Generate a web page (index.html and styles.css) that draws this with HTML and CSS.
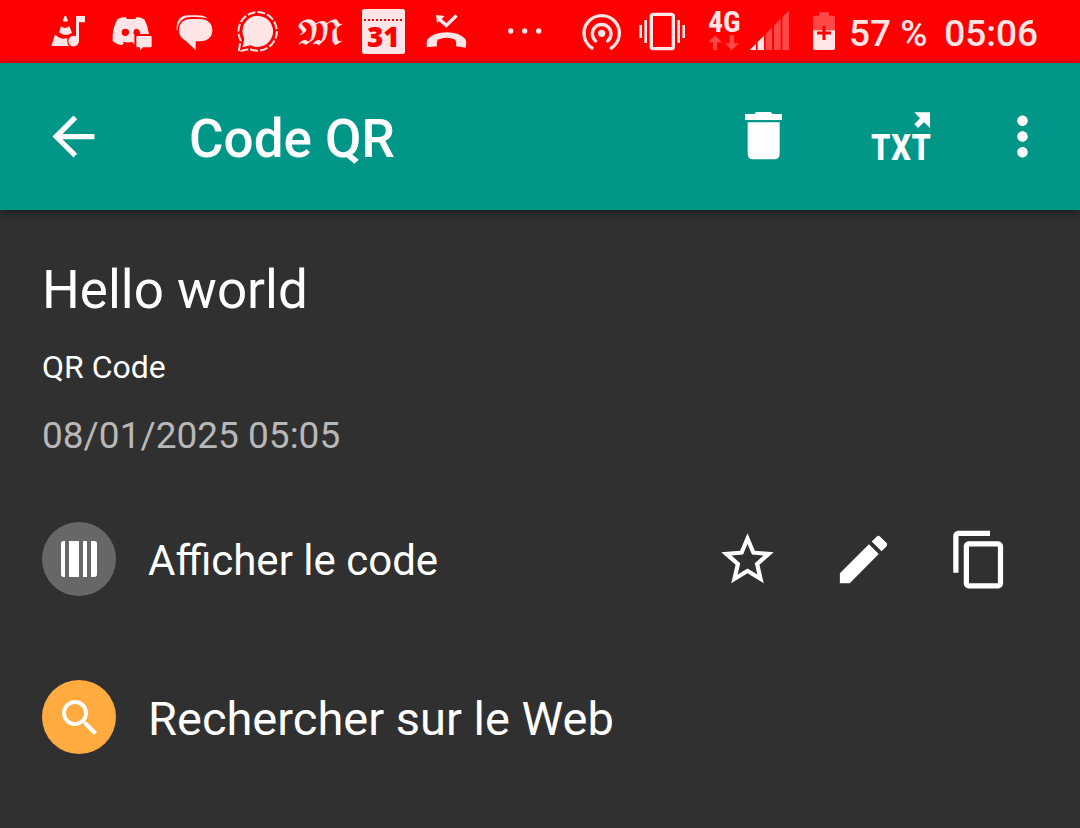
FILE: index.html
```html
<!DOCTYPE html>
<html lang="fr">
<head>
<meta charset="utf-8">
<meta name="viewport" content="width=device-width, initial-scale=1">
<title>Code QR</title>
<link rel="stylesheet" href="styles.css">
</head>
<body>
<div class="status-bar">
  <div class="status-icons">
    <svg class="status-icon" viewBox="-9 0 189 189" aria-hidden="true">
      <path d="M73 49Q76 47 79 49L84 62Q76 68 68 62ZM63 79Q75 90 88 78L96 98Q76 112 57 97ZM48 106Q62 120 82 115Q80 130 87 138H35Q34 134 37 130L44 106Z"/>
      <path d="M108 48H135V67H117V123A16 16 0 1 1 108 109Z"/>
    </svg>
    <svg class="status-icon" viewBox="180 0 189 189" aria-hidden="true">
      <path fill-rule="evenodd" d="M233 57Q245 51 257 51L261 57H286L290 51Q303 52 313 58Q324 78 327 102H283V134L277 126Q262 129 249 125L251 131L244 136Q230 133 218 124Q215 86 233 57ZM256 86A11 11 0 1 0 256 108A11 11 0 1 0 256 86ZM280 102Q280 86 291 86Q300 89 301 102Z"/>
      <path d="M292 108H332Q335 108 335 111V139Q335 142 332 142H309L300 151V142H292Q289 142 289 139V111Q289 108 292 108Z"/>
    </svg>
    <svg class="status-icon" viewBox="369 0 189 189" aria-hidden="true">
      <path d="M410 91C408 62 422 46 444 46H473Q493 46 503 56Q490 51 468 51H452C430 51 413 65 412 92Z"/>
      <path d="M453 57H479C503 57 517 69 517 91C517 112 503 124 480 124H467V151L437 122C424 115 417 105 417 91C417 70 430 57 453 57Z"/>
    </svg>
    <svg class="status-icon" viewBox="18 0 189 189" aria-hidden="true">
      <path d="M112 47A47 47 0 1 1 91 136L67 142L73 117A47 47 0 0 1 112 47Z"/>
      <path class="outline-6" stroke-dasharray="24 6" d="M112 36A58 58 0 1 1 89 147L56 154L62 121A58 58 0 0 1 112 36Z"/>
    </svg>
    <svg class="status-icon" viewBox="207 0 189 189" aria-hidden="true">
      <text class="press-mark" x="301" y="132" text-anchor="middle">𝕸</text>
    </svg>
    <svg class="status-icon" viewBox="396 0 189 189" aria-hidden="true">
      <rect x="426" y="27" width="129" height="135" rx="7"/>
      <path class="perforation" d="M432 60H549"/>
      <text class="calendar-day" x="490" y="141" text-anchor="middle">31</text>
    </svg>
    <svg class="status-icon" viewBox="585 0 189 189" aria-hidden="true">
      <path d="M648 45L674 48L665 57L679 69L706 43L713 50L679 83L657 64L651 70Z"/>
      <path d="M621 142Q618 125 623 117Q641 98 680 97Q719 98 736 117Q741 125 737 143L708 139Q710 126 706 119Q680 108 653 119Q649 126 651 139Z"/>
    </svg>
  </div>
  <svg class="status-icon" viewBox="9 0 189 189" aria-hidden="true">
    <circle cx="62" cy="93" r="8"/><circle cx="104" cy="93" r="8"/><circle cx="146" cy="93" r="8"/>
  </svg>
  <div class="system-icons">
    <svg class="status-icon" viewBox="240 0 189 189" aria-hidden="true">
      <circle cx="335" cy="100" r="11"/>
      <path class="outline-10" d="M317 123A28 28 0 1 1 353 123M306 144A53 53 0 1 1 364 144"/>
    </svg>
    <svg class="status-icon" viewBox="429 0 189 189" aria-hidden="true">
      <rect class="outline-10" x="484" y="43" width="66" height="103" rx="6"/>
      <path class="outline-8" d="M467 60V129M452 75V114M566 60V129M581 75V114"/>
    </svg>
    <svg class="status-icon narrow" viewBox="3 0 153 189" aria-hidden="true">
      <text class="network" x="88" y="96" text-anchor="middle">4G</text>
      <path class="faded" d="M60 106L81 127H66V151H54V127H40ZM104 106H117V130H132L110 151L90 130H104Z"/>
    </svg>
    <svg class="status-icon narrow" viewBox="156 0 153 189" aria-hidden="true">
      <path d="M164 150L183 131V150ZM188 126L207 107V150H188Z"/>
      <path class="faded" d="M212 102L231 82V150H212ZM237 76L257 56V150H237ZM262 51L282 32V150H262Z"/>
    </svg>
    <svg class="status-icon narrow" viewBox="309 0 153 189" aria-hidden="true">
      <path class="faded" d="M372 37H402V47H414Q420 47 420 53V91H354V53Q354 47 360 47H372Z"/>
      <path d="M354 91H420V145Q420 150 414 150H360Q354 150 354 145Z"/>
      <path class="battery-plus" d="M387 77V120M366 99H408"/>
    </svg>
  </div>
  <span class="status-text">57 %</span>
  <time class="status-text clock">05:06</time>
</div>

<header class="app-bar">
  <button class="icon-button" aria-label="Retour">
    <svg class="icon" viewBox="0 0 24 24"><path d="M20 11H7.83l5.59-5.59L12 4l-8 8 8 8 1.41-1.41L7.83 13H20z"/></svg>
  </button>
  <h1 class="app-title">Code QR</h1>
  <div class="app-actions">
    <button class="icon-button delete-button" aria-label="Supprimer">
      <svg class="icon" viewBox="36 45 189 189"><path d="M75 72H103L108 66H152L158 72H186V90H75ZM83 97H179V192Q179 208 163 208H99Q83 208 83 192Z"/></svg>
    </button>
    <button class="icon-button export-button" aria-label="Exporter en TXT">
      <svg class="icon" viewBox="450 45 189 189">
        <path d="M583 67H630V114L617 101L612 97L594 114L583 103L600 85Z"/>
        <text class="export-label" x="543" y="210" text-anchor="middle">TXT</text>
      </svg>
    </button>
    <button class="icon-button" aria-label="Plus d’options">
      <svg class="icon" viewBox="0 0 24 24"><path d="M12 8c1.100 0 2-.9 2-2s-.9-2-2-2-2 .9-2 2 .9 2 2 2zm0 2c-1.100 0-2 .9-2 2s.9 2 2 2 2-.9 2-2-.9-2-2-2zm0 6c-1.100 0-2 .9-2 2s.9 2 2 2 2-.9 2-2-.9-2-2-2z"/></svg>
    </button>
  </div>
</header>

<main class="content">
  <h2 class="code-text">Hello world</h2>
  <p class="code-format">QR Code</p>
  <time class="code-date" datetime="2025-01-08T05:05">08/01/2025 05:05</time>

  <div class="row">
    <button class="row-action">
      <svg class="badge" viewBox="36 36 222 222" aria-hidden="true"><path d="M105 93V201H101Q93 201 93 193V101Q93 93 101 93ZM117 93H147V201H117ZM159 93H171V201H159ZM183 93H193Q201 93 201 101V193Q201 201 193 201H183Z"/></svg>
      <span class="row-label">Afficher le code</span>
    </button>
    <div class="row-tools">
      <button class="icon-button" aria-label="Favori">
        <svg class="icon" viewBox="0 0 24 24"><path d="M22 9.240l-7.190-.62L12 2 9.190 8.630 2 9.240l5.460 4.730L5.820 21 12 17.270 18.180 21l-1.630-7.030L22 9.240zM12 15.400l-3.760 2.270 1-4.280-3.320-2.880 4.380-.38L12 6.100l1.710 4.040 4.380.38-3.320 2.880 1 4.280L12 15.400z"/></svg>
      </button>
      <button class="icon-button" aria-label="Modifier">
        <svg class="icon" viewBox="0 0 24 24"><path d="M3 17.250V21h3.750L17.810 9.940l-3.750-3.750L3 17.250zM20.710 7.040c.39-.39.39-1.020 0-1.410l-2.340-2.340c-.39-.39-1.020-.39-1.410 0l-1.830 1.830 3.750 3.750 1.830-1.830z"/></svg>
      </button>
      <button class="icon-button" aria-label="Copier">
        <svg class="icon" viewBox="0 0 24 24"><path d="M16 1H4c-1.100 0-2 .9-2 2v14h2V3h12V1zm3 4H8c-1.100 0-2 .9-2 2v14c0 1.100.9 2 2 2h11c1.100 0 2-.9 2-2V7c0-1.100-.9-2-2-2zm0 16H8V7h11v14z"/></svg>
      </button>
    </div>
  </div>

  <div class="row">
    <button class="row-action">
      <svg class="badge badge-search" viewBox="-7 -7 37 37" aria-hidden="true"><path d="M15.500 14h-.79l-.28-.27C15.410 12.590 16 11.110 16 9.500 16 5.910 13.090 3 9.500 3S3 5.910 3 9.500 5.910 16 9.500 16c1.610 0 3.090-.59 4.230-1.570l.27.28v.79l5 4.990L20.490 19l-4.990-5zm-6 0C7.010 14 5 11.990 5 9.500S7.010 5 9.500 5 14 7.010 14 9.500 11.990 14 9.500 14z"/></svg>
      <span class="row-label large">Rechercher sur le Web</span>
    </button>
  </div>
</main>
</body>
</html>
```

FILE: styles.css
```css
* {
  box-sizing: border-box;
}

body {
  margin: 0;
  background: #303030;
  color: #fff;
  font-family: Roboto, "Liberation Sans", sans-serif;
}

button {
  padding: 0;
  border: 0;
  background: none;
  color: inherit;
  font: inherit;
  cursor: pointer;
}

svg {
  display: block;
  flex: none;
  fill: currentColor;
}

/* Status bar */
.status-bar {
  display: flex;
  align-items: center;
  padding: 0 42px 0 37px;
  background: #f00;
  color: #ffe5e5;
  font-weight: 500;
  white-space: nowrap;
}

.status-icons,
.system-icons {
  display: flex;
}

.status-icons {
  margin-right: 15px;
}

.system-icons {
  margin-left: 14px;
}

.status-icon {
  width: 63px;
  height: 63px;
}

.status-icon.narrow {
  width: 51px;
}

.outline-6,
.outline-8,
.outline-10 {
  fill: none;
  stroke: currentColor;
  stroke-width: 6px;
}

.outline-8 {
  stroke-width: 8px;
}

.outline-10 {
  stroke-width: 10px;
  stroke-linecap: round;
}

.faded {
  fill: #ff4848;
}

.press-mark {
  font-family: "DejaVu Math TeX Gyre", "DejaVu Serif", "DejaVu Sans", serif;
  font-size: 96px;
}

.calendar-day {
  fill: #f00;
  font-family: "Open Sans", sans-serif;
  font-size: 84px;
  font-weight: 800;
}

.perforation {
  stroke: #f00;
  stroke-width: 6px;
  stroke-dasharray: 6 6;
}

.network,
.export-label {
  font-family: "Roboto Condensed", "Open Sans Condensed", Roboto, sans-serif;
  font-size: 90px;
  font-weight: 700;
}

.export-label {
  font-size: 110px;
}

.battery-plus {
  fill: none;
  stroke: #f00;
  stroke-width: 9px;
}

.status-text {
  padding-top: 4px;
  font-size: 37px;
  line-height: 59px;
}

.clock {
  margin-left: auto;
}

/* App bar */
.app-bar {
  display: flex;
  align-items: center;
  height: 147px;
  padding: 0 26px 0 42px;
  background: #009688;
  box-shadow: 0 2px 10px rgba(0, 0, 0, 0.5);
}

.app-title {
  margin: 0 0 0 84px;
  padding-top: 4px;
  font-size: 53px;
  font-weight: 500;
  line-height: 64px;
}

.app-actions {
  display: flex;
  margin-left: auto;
}

.delete-button {
  margin-right: 75px;
}

.export-button {
  margin-right: 58px;
}

.icon {
  width: 63px;
  height: 63px;
}

/* Scanned code */
.content {
  display: flex;
  flex-direction: column;
  padding: 48px 42px;
}

.code-text {
  margin: 0 0 25px;
  font-size: 53px;
  font-weight: 400;
  line-height: 64px;
}

.code-format {
  margin: 0 0 27px;
  font-size: 32px;
  line-height: 40px;
}

.code-date {
  margin-bottom: 64px;
  color: #b8b8b8;
  font-size: 37px;
  line-height: 44px;
}

/* Actions */
.row {
  display: flex;
  align-items: center;
  justify-content: space-between;
  margin-bottom: 84px;
  padding-right: 27px;
}

.row:last-child {
  margin-bottom: 0;
}

.row-action {
  display: flex;
  align-items: center;
  gap: 32px;
}

.row-tools {
  display: flex;
  gap: 53px;
}

.badge {
  width: 74px;
  height: 74px;
  border-radius: 50%;
  background: #676767;
}

.badge-search {
  background: #ffab40;
}

.row-label {
  padding-top: 4px;
  font-size: 42px;
  line-height: 56px;
}

.row-label.large {
  font-size: 47px;
}
```
